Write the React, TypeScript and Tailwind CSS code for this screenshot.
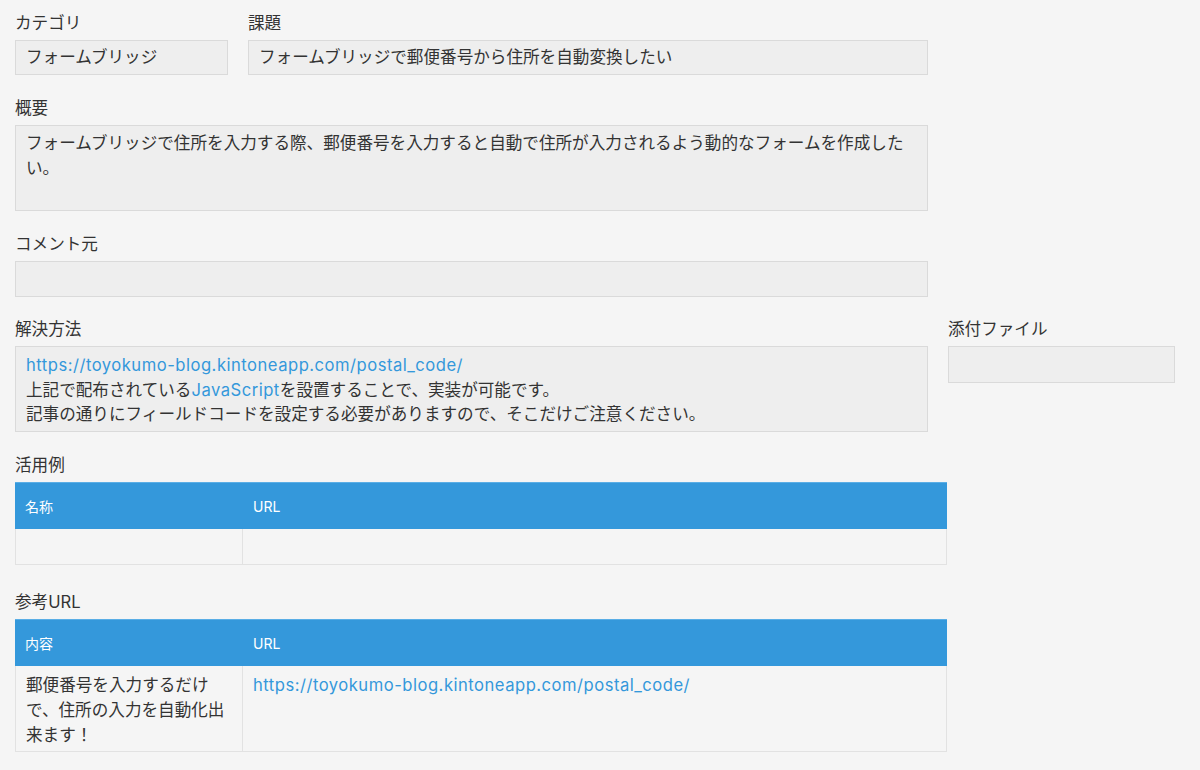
import React from "react";

const FONT = "font-['Inter','Noto_Sans_CJK_JP',sans-serif]";

function Label({ children }: { children: React.ReactNode }) {
  return <div className="h-6 leading-6 text-[16.6px] text-[#333] mb-[5px]">{children}</div>;
}

function Box({ children, className = "" }: { children?: React.ReactNode; className?: string }) {
  return (
    <div className={`border border-[#dadada] bg-[#eeeeee] px-[10px] text-[16.6px] text-[#333] ${className}`}>
      {children}
    </div>
  );
}

function Link({ children }: { children: React.ReactNode }) {
  return <span className="text-[#3498db] tracking-[0.5px]">{children}</span>;
}

const URL = "https://toyokumo-blog.kintoneapp.com/postal_code/";

export default function App() {
  return (
    <div className={`min-h-[770px] bg-[#f5f5f5] pl-[15px] pt-[11px] ${FONT}`}>
      {/* row 1 */}
      <div className="flex gap-5">
        <div className="w-[213px]">
          <Label>カテゴリ</Label>
          <Box className="h-[35px] leading-[33px]">フォームブリッジ</Box>
        </div>
        <div className="w-[680px]">
          <Label>課題</Label>
          <Box className="h-[35px] leading-[33px]">フォームブリッジで郵便番号から住所を自動変換したい</Box>
        </div>
      </div>

      <div className="w-[913px] mt-[21px]">
        <Label>概要</Label>
        <Box className="h-[86px] pt-[5px] leading-[25px]">
          フォームブリッジで住所を入力する際、郵便番号を入力すると自動で住所が入力されるよう動的なフォームを作成したい。
        </Box>
      </div>

      <div className="w-[913px] mt-[21px]">
        <Label>コメント元</Label>
        <Box className="h-[36px]" />
      </div>

      <div className="flex gap-5 mt-[20px]">
        <div className="w-[913px]">
          <Label>解決方法</Label>
          <Box className="h-[86px] pt-[6px] leading-[24.5px]">
            <div>
              <Link>{URL}</Link>
            </div>
            <div>
              上記で配布されている<Link>JavaScript</Link>を設置することで、実装が可能です。
            </div>
            <div>記事の通りにフィールドコードを設定する必要がありますので、そこだけご注意ください。</div>
          </Box>
        </div>
        <div className="w-[227px]">
          <Label>添付ファイル</Label>
          <Box className="h-[37px]" />
        </div>
      </div>

      {/* 活用例 */}
      <div className="w-[932px] mt-[21px]">
        <Label>活用例</Label>
        <div className="flex h-[47px] items-center bg-[#3498db] border-t border-[#5aaee6] text-white text-[14px]">
          <div className="w-[228px] pl-[10px]">名称</div>
          <div className="flex-1 pl-[10px]">URL</div>
        </div>
        <div className="flex h-9 border-x border-b border-[#e2e2e2]">
          <div className="w-[227px] border-r border-[#e2e2e2]" />
          <div className="flex-1" />
        </div>
      </div>

      {/* 参考URL */}
      <div className="w-[932px] mt-[25px]">
        <Label>参考URL</Label>
        <div className="flex h-[47px] items-center bg-[#3498db] border-t border-[#5aaee6] text-white text-[14px]">
          <div className="w-[228px] pl-[10px]">内容</div>
          <div className="flex-1 pl-[10px]">URL</div>
        </div>
        <div className="flex border-x border-b border-[#e2e2e2] text-[16.6px] text-[#333] leading-[25px]">
          <div className="w-[227px] border-r border-[#e2e2e2] px-[10px] pt-[7px] pb-[3px]">
            郵便番号を入力するだけ
            <br />
            で、住所の入力を自動化出
            <br />
            来ます！
          </div>
          <div className="flex-1 px-[10px] pt-[7px]">
            <Link>{URL}</Link>
          </div>
        </div>
      </div>
    </div>
  );
}
